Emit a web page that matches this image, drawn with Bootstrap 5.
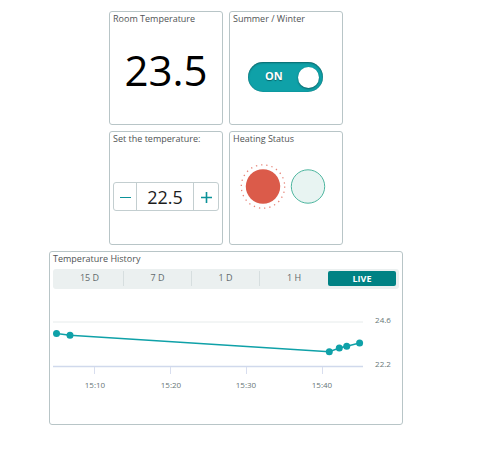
<!DOCTYPE html>
<html lang="en">
<head>
<meta charset="utf-8">
<meta name="viewport" content="width=device-width, initial-scale=1">
<title>Heating dashboard</title>
<link href="https://cdn.jsdelivr.net/npm/bootstrap@5.3.0/dist/css/bootstrap.min.css" rel="stylesheet">
<style>
  body { font-family: "Open Sans", sans-serif; background: #fff; color: #4f5354; }
  .dash { padding: 11px 36px 0 0; gap: 6px; }
  .tiles { gap: 6px; }
  .widget { border: 1px solid #b8c5c7; border-radius: 3px; padding: 0 3px; }
  .tile { width: 114px; height: 114px; }
  .history { width: 100%; max-width: 354px; min-height: 174px; }
  .title { font-size: 9px; line-height: 14px; font-weight: 400; margin: 0; }
  .reading { font-size: 42px; line-height: 88px; color: #000; text-align: center; }
  .toggle { width: 75px; height: 30px; margin: 36px auto 0 15px; }
  .toggle input { appearance: none; width: 100%; height: 100%; margin: 0; border-radius: 15px; background: #0fa1a8;
    box-shadow: inset 0 1px 2px rgba(0,0,0,.35), inset 0 0 1px rgba(0,0,0,.3); display: flex; align-items: center; padding: 0 4px; cursor: pointer; }
  .toggle input::before { content: ""; width: 21px; height: 21px; border-radius: 50%; background: #fff; box-shadow: 0 1px 2px rgba(0,0,0,.4); }
  .toggle input:checked { justify-content: flex-end; }
  .toggle span { left: 17px; top: 6px; font-size: 11px; line-height: 16px; font-weight: 700; color: #fff; text-shadow: 0 1px 1px rgba(0,0,0,.4); pointer-events: none; }
  .stepper { height: 29px; margin-top: 36px; border: 1px solid #c3ced0; border-radius: 3px; }
  .stepper button { width: 24px; border: 0; padding: 2px 0 0; background: none; }
  .stepper button:first-child { width: 22px; }
  .stepper input { border: solid #c3ced0; border-width: 0 1px; min-width: 0; width: 1px; padding: 0; font-size: 18px; line-height: 26px; color: #1c1c1c; text-align: center; background: none; }
  .lamps { margin-top: 12px; padding-left: 7px; }
  .ranges { background: #ebf0f0; border-radius: 3px; padding: 2px 3px; height: 20px; margin-top: 3px; }
  .ranges button { border: 0; border-right: 1px solid #d6dedf; background: none; padding: 0 0 2px; font-size: 9px; line-height: 13px; color: #626a6c; height: 15px; flex: 0 0 20%; }
  .ranges button:nth-child(4) { border-right: 0; }
  .ranges .live { background: #008284; color: #fff; font-weight: 700; border: 0; border-radius: 2px; line-height: 15px; padding: 0; }
  .chart text { font-size: 8px; fill: #687677; }
</style>
<script src="https://cdn.jsdelivr.net/npm/bootstrap@5.3.0/dist/js/bootstrap.bundle.min.js"></script>
</head>
<body>
<main class="dash d-flex flex-column align-items-center">
  <div class="tiles d-flex">
    <section class="widget tile">
      <h2 class="title">Room Temperature</h2>
      <div class="reading">23.5</div>
    </section>
    <section class="widget tile">
      <h2 class="title">Summer / Winter</h2>
      <label class="toggle position-relative d-block">
        <input type="checkbox" role="switch" checked aria-label="Summer / Winter">
        <span class="position-absolute">ON</span>
      </label>
    </section>
  </div>
  <div class="tiles d-flex">
    <section class="widget tile">
      <h2 class="title"><label for="setpoint" class="d-block">Set the temperature:</label></h2>
      <div class="stepper d-flex">
        <button type="button" class="d-flex align-items-center justify-content-center" aria-label="Decrease">
          <svg width="11" height="11" viewBox="0 0 11 11"><path d="M0 5.5H11" stroke="#0b9299" stroke-width="1"/></svg>
        </button>
        <input id="setpoint" type="text" class="flex-fill" value="22.5">
        <button type="button" class="d-flex align-items-center justify-content-center" aria-label="Increase">
          <svg width="11" height="11" viewBox="0 0 11 11"><path d="M0 5.5H11M5.5 0V11" stroke="#0b9299" stroke-width="1.6"/></svg>
        </button>
      </div>
    </section>
    <section class="widget tile">
      <h2 class="title">Heating Status</h2>
      <div class="lamps d-flex">
        <svg width="90" height="56" viewBox="0 0 90 56" role="img" aria-label="Heating on">
          <circle cx="23" cy="28.5" r="17.2" fill="#db5b4a"/>
          <circle cx="23" cy="28.5" r="21.7" fill="none" stroke="#e68478" stroke-width="1.3" stroke-dasharray="1.3 3.945"/>
          <circle cx="68" cy="28.5" r="16.7" fill="#e8f4f2" stroke="#4db69f"/>
        </svg>
      </div>
    </section>
  </div>
  <section class="widget history">
    <h2 class="title">Temperature History</h2>
    <div class="ranges d-flex" role="group" aria-label="Range">
      <button type="button">15 D</button>
      <button type="button">7 D</button>
      <button type="button">1 D</button>
      <button type="button">1 H</button>
      <button type="button" class="live" aria-pressed="true">LIVE</button>
    </div>
    <svg class="chart d-block w-100" viewBox="0 0 346 110" role="img" aria-label="Temperature over time">
      <path d="M0 33H310" stroke="#e6ebeb"/>
      <path d="M0 77.5H310" stroke="#d0d9ec" stroke-width="1.4"/>
      <path d="M41.5 78V85M117.5 78V85M193.5 78V85M269.5 78V85" stroke="#d8deef"/>
      <path d="M3.500 44.500L17 46.300L276.300 62.700L286.300 59L293.700 57.300L306.600 54" fill="none" stroke="#0fa1a8" stroke-width="1.4"/>
      <g fill="#0fa1a8">
        <circle cx="3.500" cy="44.500" r="3.500"/><circle cx="17" cy="46.300" r="3.500"/><circle cx="276.300" cy="62.700" r="3.500"/>
        <circle cx="286.300" cy="59" r="3.500"/><circle cx="293.700" cy="57.300" r="3.500"/><circle cx="306.600" cy="54" r="3.500"/>
      </g>
      <g text-anchor="middle">
        <text x="42" y="99">15:10</text><text x="118" y="99">15:20</text><text x="193" y="99">15:30</text><text x="269" y="99">15:40</text>
        <text x="330" y="34">24.6</text><text x="330" y="78">22.2</text>
      </g>
    </svg>
  </section>
</main>
</body>
</html>
